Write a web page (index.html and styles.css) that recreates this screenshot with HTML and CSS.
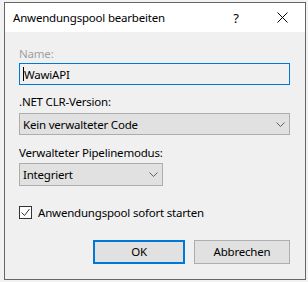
FILE: index.html
```html
<!DOCTYPE html>
<html lang="de">
<head>
    <meta charset="UTF-8">
    <title>Anwendungspool bearbeiten</title>
    <link rel="stylesheet" href="styles.css">
</head>
<body>
<div class="dlg">
    <div class="titlebar">
        <span class="title">Anwendungspool bearbeiten</span>
        <span class="help">?</span>
        <span class="close">
            <svg width="11" height="11" viewBox="0 0 11 11"><path d="M0.5 0.5L10.5 10.5M10.5 0.5L0.5 10.5" stroke="#000" stroke-width="1"/></svg>
        </span>
    </div>
    <div class="body">
        <div class="lbl disabled">Name:</div>
        <div class="txt"><span class="caret"></span>WawiAPI</div>
        <div class="lbl">.NET CLR-Version:</div>
        <div class="combo first">
            <span>Kein verwalteter Code</span>
            <svg width="9" height="5" viewBox="0 0 9 5"><path d="M0.5 0.5L4.5 4.5L8.5 0.5" fill="none" stroke="#606060"/></svg>
        </div>
        <div class="lbl second">Verwalteter Pipelinemodus:</div>
        <div class="combo short">
            <span>Integriert</span>
            <svg width="9" height="5" viewBox="0 0 9 5"><path d="M0.5 0.5L4.5 4.5L8.5 0.5" fill="none" stroke="#606060"/></svg>
        </div>
        <div class="chk">
            <span class="box">
                <svg width="11" height="11" viewBox="0 0 11 11"><path d="M1.5 5.5L4.5 8.5L9.5 2" fill="none" stroke="#333" stroke-width="1"/></svg>
            </span>
            <span>Anwendungspool sofort starten</span>
        </div>
        <div class="btns">
            <span class="btn def">OK</span>
            <span class="btn cancel">Abbrechen</span>
        </div>
    </div>
</div>
</body>
</html>
```

FILE: styles.css
```css
html, body {
    margin: 0;
    padding: 0;
}

* {
    box-sizing: border-box;
}

body {
    width: 308px;
    height: 282px;
    overflow: hidden;
    background: #f2f2f2;
    font-family: "Noto Sans", "Open Sans", sans-serif;
    font-size: 11.5px;
    letter-spacing: -0.2px;
    color: #000;
}

.dlg {
    margin: 2px 0 0 4px;
    width: 302px;
    height: 278px;
    border: 1px solid #666;
    background: #f0f0f0;
    display: flex;
    flex-direction: column;
}

.titlebar {
    height: 29px;
    background: #fff;
    display: flex;
    align-items: center;
}

.title {
    flex: 1;
    padding-left: 8px;
}

.help {
    width: 46px;
    text-align: center;
    font-size: 13px;
}

.close {
    width: 46px;
    display: flex;
    justify-content: center;
}

.body {
    flex: 1;
    padding: 0 15px 0 14px;
    display: flex;
    flex-direction: column;
}

.lbl {
    line-height: 15px;
    margin-top: 9px;
}

.lbl.disabled {
    margin-top: 14px;
    color: #a0a0a0;
}

.lbl.second {
    margin-top: 10px;
}

.txt {
    margin-top: 2px;
    height: 22px;
    border: 1px solid #0078d7;
    background: #f0f0f0;
    display: flex;
    align-items: center;
    padding-left: 3px;
}

.caret {
    width: 1px;
    height: 14px;
    background: #000;
}

.combo {
    height: 22px;
    border: 1px solid #adadad;
    background: #e1e1e1;
    display: flex;
    align-items: center;
    justify-content: space-between;
    padding: 0 4px 0 3px;
}

.combo.first {
    margin-top: 4px;
}

.combo.short {
    margin-top: 3px;
    height: 23px;
    width: 144px;
}

.chk {
    margin-top: 20px;
    height: 13px;
    display: flex;
    align-items: center;
    gap: 6px;
    line-height: 15px;
}

.box {
    width: 13px;
    height: 13px;
    border: 1px solid #333;
    background: #fff;
    display: flex;
}

.btns {
    margin-top: 21px;
    display: flex;
    justify-content: flex-end;
    gap: 9px;
}

.btn {
    height: 24px;
    line-height: 22px;
    text-align: center;
    background: #e1e1e1;
    border: 1px solid #adadad;
}

.btn.def {
    width: 92px;
    border: 2px solid #0078d7;
    line-height: 20px;
}

.btn.cancel {
    width: 96px;
}
```
